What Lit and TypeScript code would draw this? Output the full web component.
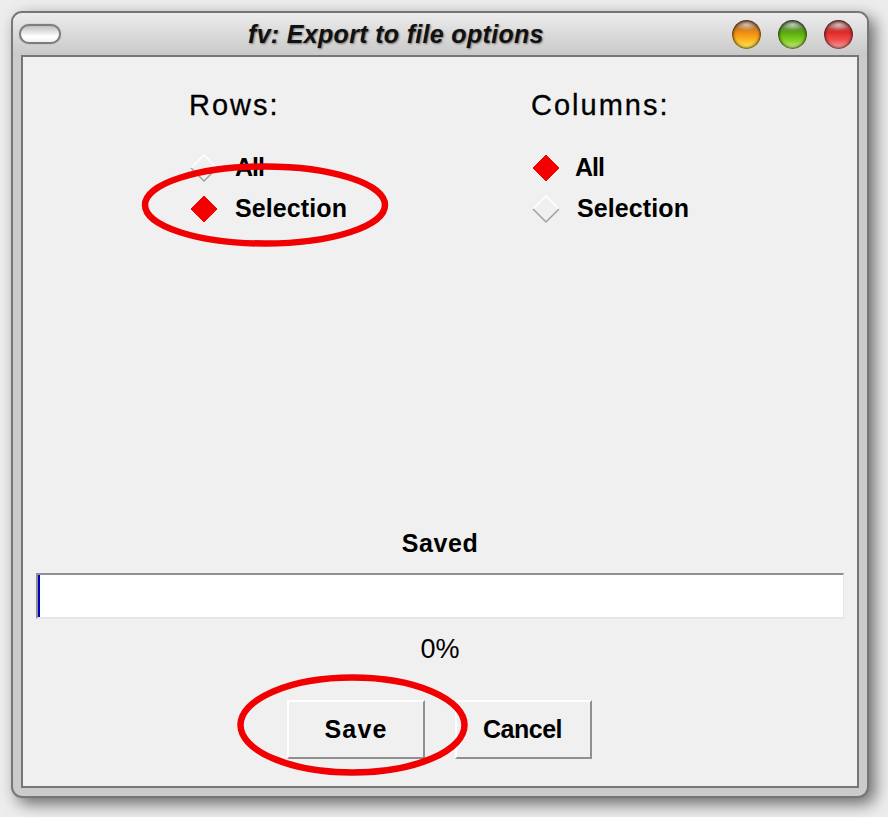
import { LitElement, html, css, svg } from "lit";
import { customElement } from "lit/decorators.js";

const radio = (on: boolean) => html`<svg class="dia" width="30" height="30" viewBox="0 0 30 30">
  ${on
    ? svg`<path d="M15 2 L28 15 L15 28 L2 15 Z" fill="#f50000" stroke="#f50000" stroke-width="1" stroke-linejoin="round"/>`
    : svg`<path d="M2 15 L15 2 L28 15" fill="none" stroke="#ffffff" stroke-width="1.5"/>
          <path d="M2 15 L15 28 L28 15" fill="none" stroke="#a0a0a0" stroke-width="1.5"/>`}
</svg>`;

@customElement("app-root")
export class AppRoot extends LitElement {
  static styles = css`
    :host {
      display: block;
      position: relative;
      width: 888px;
      height: 817px;
      overflow: hidden;
      background: #ededed;
      font-family: "Liberation Sans", Arial, sans-serif;
      color: #000;
    }
    .page {
      padding: 11px 0 0 11px;
    }
    .window {
      box-sizing: border-box;
      width: 858px;
      height: 787px;
      display: flex;
      flex-direction: column;
      border: 2px solid #767676;
      border-radius: 11px;
      background: #cbcbcb;
      box-shadow: 6px 6px 16px rgba(0, 0, 0, 0.55);
    }
    .titlebar {
      height: 42px;
      display: flex;
      align-items: center;
      padding: 0 14px 0 6px;
      border-radius: 9px 9px 0 0;
      background: linear-gradient(#ececec, #c9c9c9);
    }
    .pill {
      box-sizing: border-box;
      width: 42px;
      height: 20px;
      border: 2px solid #7c7c7c;
      border-radius: 10px;
      background: linear-gradient(#c0c0c0, #ffffff 65%, #f2f2f2);
      box-shadow: 0 0 1px rgba(0, 0, 0, 0.5);
    }
    .title {
      margin-left: 187px;
      font-size: 25px;
      letter-spacing: 0.32px;
      font-weight: bold;
      font-style: italic;
      white-space: nowrap;
      color: #111;
      text-shadow: 1px 1px 2px rgba(0, 0, 0, 0.45);
    }
    .lights {
      margin-left: auto;
      display: flex;
      gap: 17px;
    }
    .light {
      width: 29px;
      height: 29px;
      border-radius: 50%;
      box-sizing: border-box;
      box-shadow: inset 0 0 3px 1px rgba(30, 15, 15, 0.85);
    }
    .orange {
      background: radial-gradient(ellipse 38% 20% at 50% 16%, rgba(255, 255, 255, 0.55), transparent),
        linear-gradient(#7a4a30 0, #b07a40 22%, #f08a10 42%, #fbb820 70%, #fff060 100%);
    }
    .green {
      background: radial-gradient(ellipse 38% 20% at 50% 16%, rgba(255, 255, 255, 0.6), transparent),
        linear-gradient(#305030 0, #6a9050 22%, #58a810 42%, #80d020 70%, #c8f090 100%);
    }
    .red {
      background: radial-gradient(ellipse 38% 20% at 50% 16%, rgba(255, 255, 255, 0.6), transparent),
        linear-gradient(#703030 0, #b06060 22%, #e02828 42%, #f05050 70%, #ffa8a8 100%);
    }
    .body {
      box-sizing: border-box;
      flex: 1;
      margin: 0 8px 8px 8px;
      border: 2px solid #767676;
      background: #f0f0f0;
      display: flex;
      flex-direction: column;
      padding: 30px 13px 0 13px;
    }
    .options {
      display: grid;
      grid-template-columns: 342px auto;
      padding-left: 153px;
    }
    .group h2 {
      margin: 0 0 24px 0;
      font-size: 29px;
      line-height: 36px;
      font-weight: normal;
      letter-spacing: 2px;
      -webkit-text-stroke: 0.3px #000;
    }
    .row {
      display: flex;
      align-items: center;
      height: 41px;
      font-size: 25px;
      font-weight: bold;
      letter-spacing: 0.1px;
    }
    .all {
      letter-spacing: -1px;
    }
    .dia {
      flex: none;
      margin-right: 16px;
    }
    .tight .dia {
      margin-right: 14px;
    }
    .status {
      margin-top: auto;
      display: flex;
      flex-direction: column;
      align-items: center;
    }
    .saved {
      font-size: 25px;
      font-weight: bold;
      letter-spacing: 0.6px;
      line-height: 32px;
      margin-bottom: 14px;
    }
    .bar {
      box-sizing: border-box;
      align-self: stretch;
      height: 46px;
      display: flex;
      background: #fff;
      border-style: solid;
      border-width: 2px 1px 2px 2px;
      border-color: #909090 #e6e6e6 #e6e6e6 #909090;
    }
    .fill {
      width: 2px;
      background: #0000c8;
    }
    .pct {
      font-size: 27px;
      line-height: 32px;
      margin: 14px 0 35px;
    }
    .buttons {
      display: flex;
      gap: 30px;
      margin-bottom: 27px;
      padding-right: 1px;
    }
    .btn {
      box-sizing: border-box;
      width: 138px;
      height: 59px;
      display: flex;
      align-items: center;
      justify-content: center;
      font-size: 25px;
      font-weight: bold;
      border-style: solid;
      border-width: 2px;
      border-color: #ffffff #909090 #909090 #ffffff;
    }
    .save {
      letter-spacing: 1.2px;
    }
    .cancel {
      width: 137px;
      padding-right: 2px;
      letter-spacing: -0.5px;
    }
    .rings {
      position: absolute;
      inset: 0;
      pointer-events: none;
    }
  `;

  render() {
    return html`
      <div class="page">
        <div class="window">
          <div class="titlebar">
            <div class="pill"></div>
            <div class="title">fv: Export to file options</div>
            <div class="lights">
              <div class="light orange"></div>
              <div class="light green"></div>
              <div class="light red"></div>
            </div>
          </div>
          <div class="body">
            <div class="options">
              <div class="group">
                <h2>Rows:</h2>
                <div class="row all">${radio(false)}All</div>
                <div class="row">${radio(true)}Selection</div>
              </div>
              <div class="group">
                <h2>Columns:</h2>
                <div class="row all tight">${radio(true)}All</div>
                <div class="row">${radio(false)}Selection</div>
              </div>
            </div>
            <div class="status">
              <div class="saved">Saved</div>
              <div class="bar"><div class="fill"></div></div>
              <div class="pct">0%</div>
              <div class="buttons">
                <div class="btn save">Save</div>
                <div class="btn cancel">Cancel</div>
              </div>
            </div>
          </div>
        </div>
      </div>
      <svg class="rings" width="888" height="817" viewBox="0 0 888 817">
        <ellipse cx="265" cy="205" rx="120" ry="38.5" fill="none" stroke="#f00000" stroke-width="6.5"/>
        <ellipse cx="352.5" cy="725" rx="112" ry="47.5" fill="none" stroke="#f00000" stroke-width="6.5"/>
      </svg>
    `;
  }
}
